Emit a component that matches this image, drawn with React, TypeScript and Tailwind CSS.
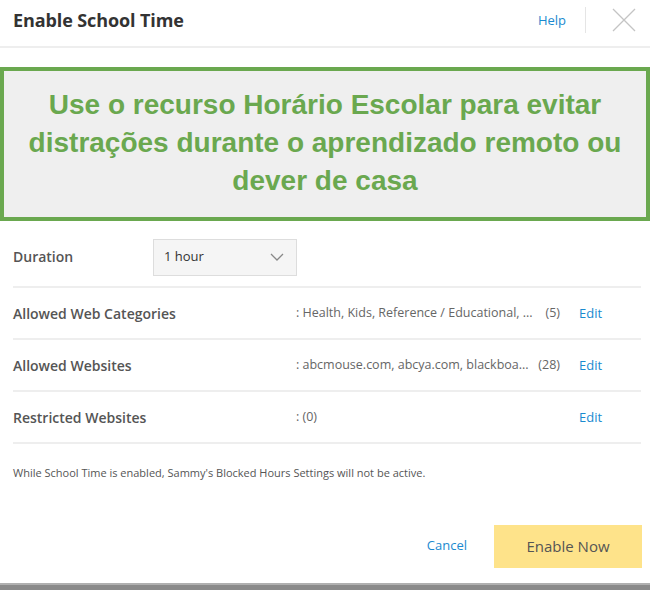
const rows = [
  { label: 'Allowed Web Categories', value: ': Health, Kids, Reference / Educational, ...', count: '(5)' },
  { label: 'Allowed Websites', value: ': abcmouse.com, abcya.com, blackboa...', count: '(28)' },
  { label: 'Restricted Websites', value: ': (0)', count: '' },
]

export default function App() {
  return (
    <div className="w-[650px] h-[590px] bg-white flex flex-col font-['Open_Sans',sans-serif] text-[#555]">
      {/* Header */}
      <div className="h-[48px] flex items-center border-b-2 border-[#eeeeee] pl-[13px] pr-[14px] pb-[5px]">
        <h2 className="text-[18px] font-bold text-[#333] tracking-[-0.1px] flex-1">Enable School Time</h2>
        <a className="text-[13px] text-[#1a8ad0] mr-[19px]">Help</a>
        <div className="w-px h-[26px] bg-[#e5e5e5] mr-[26px] -mt-[2px]" />
        <svg width="24" height="24" viewBox="0 0 24 24" className="-mt-[2px]">
          <path d="M1 1L23 23M23 1L1 23" stroke="#c4c4c4" strokeWidth="1.3" fill="none" />
        </svg>
      </div>

      {/* Banner */}
      <div className="mt-[19px] h-[154px] border-4 border-[#6aa84f] bg-[#efefef] flex items-center justify-center">
        <p className="font-['Liberation_Sans',Arial,sans-serif] font-bold text-[28px] leading-[38px] text-[#6aa84f] text-center -mt-[2px]">
          Use o recurso Horário Escolar para evitar
          <br />
          distrações durante o aprendizado remoto ou
          <br />
          dever de casa
        </p>
      </div>

      {/* Settings */}
      <div className="px-[13px] pr-[9px]">
        <div className="h-[67px] flex items-center border-b-2 border-[#eeeeee]">
          <span className="w-[140px] text-[14px] font-semibold mt-[6px]">Duration</span>
          <div className="w-[144px] h-[37px] bg-[#f5f5f5] border border-[#dddddd] flex items-center pl-[10px] pr-[12px] mt-[7px]">
            <span className="flex-1 text-[13px] text-[#333]">1 hour</span>
            <svg width="14" height="8" viewBox="0 0 14 8">
              <path d="M1 1L7 7L13 1" stroke="#888" strokeWidth="1.3" fill="none" />
            </svg>
          </div>
        </div>
        {rows.map((r) => (
          <div key={r.label} className="h-[52px] flex items-center border-b-2 border-[#eeeeee] pt-[1px]">
            <span className="w-[283px] text-[14px] font-semibold">{r.label}</span>
            <span className="flex-1 text-[12.5px] text-[#666]">{r.value}</span>
            <span className="mr-[19px] text-[12.5px] text-[#666] text-right">{r.count}</span>
            <a className="w-[62px] text-[13px] text-[#1a8ad0]">Edit</a>
          </div>
        ))}
        <p className="mt-[21px] text-[11px] text-[#555]">
          While School Time is enabled, Sammy's Blocked Hours Settings will not be active.
        </p>
      </div>

      {/* Footer */}
      <div className="mt-[43px] flex items-center justify-end pr-[8px]">
        <a className="text-[13px] text-[#1a8ad0] mr-[27px]">Cancel</a>
        <button className="w-[148px] h-[43px] bg-[#fee38a] text-[15px] text-[#555]">Enable Now</button>
      </div>
      <div className="mt-auto h-[7px] bg-[#8a8a8a] border-t-2 border-[#b0b0b0]" />
    </div>
  )
}
